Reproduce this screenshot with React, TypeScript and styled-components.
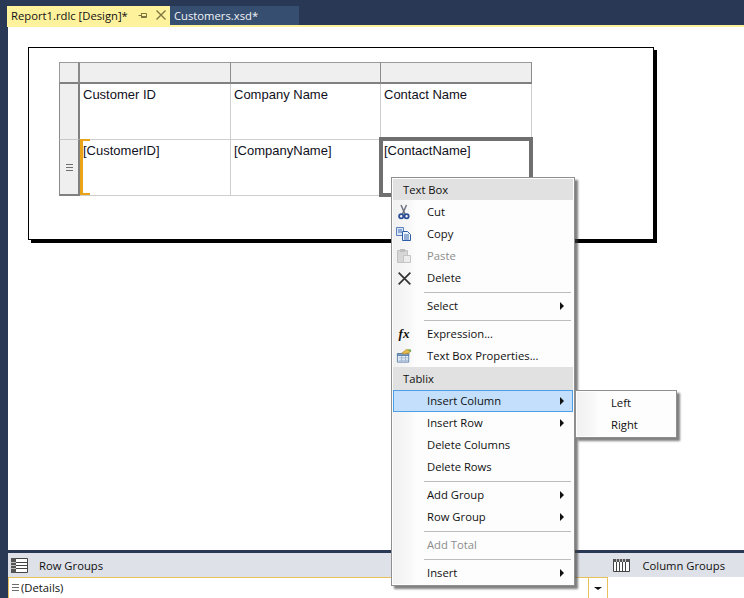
import React from "react";
import styled, { createGlobalStyle } from "styled-components";

const GlobalStyle = createGlobalStyle`
  html, body {
    margin: 0;
    padding: 0;
    background: #293955;
  }
  * {
    box-sizing: border-box;
  }
`;

const uiFont = `"Open Sans", "Noto Sans", sans-serif`;

const Page = styled.div`
  position: relative;
  width: 744px;
  height: 598px;
  overflow: hidden;
  display: flex;
  flex-direction: column;
  padding: 6px 0 0 7px;
  background: #293955;
  font-family: ${uiFont};
  font-size: 11.25px;
  color: #101010;
`;

const TabStrip = styled.div`
  display: flex;
  height: 19px;
  flex: none;
`;

const Tab = styled.div<{ $active?: boolean }>`
  display: flex;
  align-items: center;
  width: ${(p) => (p.$active ? "163px" : "129px")};
  padding: 0 0 1px 4px;
  background: ${(p) => (p.$active ? "#fff29d" : "#364e6f")};
  color: ${(p) => (p.$active ? "#111" : "#f2f4f8")};
  white-space: nowrap;
`;

const TabActions = styled.div`
  display: flex;
  align-items: center;
  gap: 9px;
  margin-left: 10px;
`;

const AccentLine = styled.div`
  height: 2px;
  flex: none;
  background: #fff29d;
`;

const Surface = styled.div`
  flex: 1;
  margin-left: 1px;
  background: #fff;
  padding: 20px 0 0 20px;
`;

const ReportBody = styled.div`
  width: 626px;
  height: 193px;
  border: 1px solid #000;
  box-shadow: 3px 3px 0 #000;
  padding: 14px 0 0 30px;
  background: #fff;
`;

const Tablix = styled.div`
  display: grid;
  grid-template-columns: 21px 151px 150px 151px;
  grid-template-rows: 22px 56px 56px;
  width: 473px;
  font-family: "Liberation Sans", Arial, sans-serif;
  font-size: 13px;
  color: #10101c;
`;

const Corner = styled.div`
  background: #efefef;
  border: 1px solid #9a9a9a;
  border-right: 2px solid #8a8a8a;
  border-bottom: 2px solid #808080;
`;

const ColumnHandle = styled.div`
  background: #efefef;
  border-top: 1px solid #9a9a9a;
  border-right: 1px solid #8c8c8c;
  border-bottom: 2px solid #808080;
`;

const RowHandle = styled.div<{ $last?: boolean }>`
  display: flex;
  align-items: center;
  justify-content: center;
  background: #efefef;
  border-left: 1px solid #8a8a8a;
  border-right: 2px solid #808080;
  border-bottom: ${(p) => (p.$last ? "2px solid #808080" : "1px solid #c8c8c8")};
`;

const Cell = styled.div<{ $selected?: boolean; $handle?: boolean }>`
  position: relative;
  padding: 3px 0 0 3px;
  background: #fff;
  border-right: 1px solid #cfcfcf;
  border-bottom: 1px solid #cfcfcf;

  ${(p) =>
    p.$selected &&
    `
    &::after {
      content: "";
      position: absolute;
      inset: -3px -2px -2px -2px;
      border: 4px solid #6f6f6f;
    }
  `}

  ${(p) =>
    p.$handle &&
    `
    &::before {
      content: "";
      position: absolute;
      left: 0;
      top: -1px;
      bottom: 0;
      width: 7px;
      border-left: 3px solid #e8a317;
      border-top: 2px solid #e8a317;
      border-bottom: 2px solid #e8a317;
      clip-path: polygon(0 0, 100% 0, 100% 2px, 3px 2px, 3px calc(100% - 2px), 100% calc(100% - 2px), 100% 100%, 0 100%);
    }
  `}
`;

const BottomPanel = styled.div`
  flex: none;
  margin-left: 1px;
  border-top: 3px solid #293955;
`;

const GroupBar = styled.div`
  display: flex;
  align-items: center;
  height: 24px;
  padding-left: 3px;
  background: #dee1e8;
`;

const GroupLabel = styled.span`
  margin-left: 11px;
`;

const ColumnGroups = styled.div`
  display: flex;
  align-items: center;
  margin-left: auto;
  padding-right: 19px;

  ${GroupLabel} {
    margin-left: 12px;
  }
`;

const GroupRows = styled.div`
  display: flex;
  height: 21px;
  background: #fff;
`;

const DetailsRow = styled.div`
  display: flex;
  align-items: center;
  gap: 2px;
  width: 580px;
  padding: 0 0 1px 3px;
  border-top: 1px solid #e8c05c;
  border-left: 1px solid #e8c05c;
`;

const DropButton = styled.div`
  display: flex;
  align-items: center;
  justify-content: center;
  width: 20px;
  border-top: 1px solid #e8c05c;
  border-left: 1px solid #e8c05c;
  border-right: 1px solid #e8c05c;

  &::after {
    content: "";
    border-top: 3px solid #111;
    border-left: 4px solid transparent;
    border-right: 4px solid transparent;
  }
`;

const Menu = styled.div<{ $sub?: boolean }>`
  position: absolute;
  left: ${(p) => (p.$sub ? "575px" : "391px")};
  top: ${(p) => (p.$sub ? "390px" : "177px")};
  width: ${(p) => (p.$sub ? "102px" : "184px")};
  padding: 1px;
  background: #fdfdfd;
  border: 1px solid #8f8f8f;
  box-shadow: 3px 3px 2px rgba(60, 60, 60, 0.65);
`;

const MenuInner = styled.div<{ $gutter: number }>`
  background: linear-gradient(
    to right,
    #f1f1f1 0,
    #f8f8f8 ${(p) => p.$gutter - 6}px,
    #fdfdfd ${(p) => p.$gutter}px
  );
`;

const MenuHeader = styled.div<{ $height: number; $gap?: number }>`
  display: flex;
  align-items: center;
  height: ${(p) => p.$height}px;
  margin-bottom: ${(p) => p.$gap ?? 0}px;
  padding: 0 0 1px 10px;
  background: #e1e1e1;
`;

const MenuItem = styled.div<{ $hot?: boolean; $disabled?: boolean }>`
  position: relative;
  display: flex;
  align-items: center;
  height: 22px;
  padding: 0 0 1px 34px;
  color: ${(p) => (p.$disabled ? "#8d8d8d" : "inherit")};
  background: ${(p) => (p.$hot ? "#c3dffb" : "transparent")};
  box-shadow: ${(p) => (p.$hot ? "inset 0 0 0 1px #4e9fe6" : "none")};
`;

const MenuIcon = styled.span`
  position: absolute;
  left: 3px;
  top: 3px;
  width: 16px;
  height: 16px;
  display: flex;
  align-items: center;
  justify-content: center;
`;

const FxGlyph = styled.span`
  font-family: "Liberation Serif", serif;
  font-style: italic;
  font-weight: bold;
  font-size: 13px;
  line-height: 16px;
  color: #111;
`;

const SubArrow = styled.span`
  position: absolute;
  right: 9px;
  top: 7px;
  border-left: 4px solid #111;
  border-top: 4px solid transparent;
  border-bottom: 4px solid transparent;
`;

const Separator = styled.div`
  height: 6px;
  margin-left: 31px;
  margin-right: 2px;
  display: flex;
  align-items: center;

  &::after {
    content: "";
    flex: 1;
    height: 1px;
    background: #bdbdbd;
  }
`;

const HamburgerIcon = () => (
  <svg width="7" height="7" viewBox="0 0 7 7">
    <path d="M0 .5h7M0 3.5h7M0 6.5h7" stroke="#6e6e6e" strokeWidth="1" />
  </svg>
);

const PinIcon = () => (
  <svg width="9" height="9" viewBox="0 0 9 9">
    <path d="M.5 4.5H3M3.5 2v5M3.5 2.5H8.5V6.5H3.5M3.5 5.5H8.5" stroke="#7d7540" fill="none" />
  </svg>
);

const CloseIcon = ({ color = "#7d7540", size = 10, width = 1.4 }: { color?: string; size?: number; width?: number }) => (
  <svg width={size} height={size} viewBox="0 0 10 10">
    <path d="M.5.5l9 9M9.5.5l-9 9" stroke={color} strokeWidth={width} fill="none" />
  </svg>
);

const ScissorsIcon = () => (
  <svg width="16" height="16" viewBox="0 0 16 16">
    <path d="M5 1l4 9M10.5 1L6.5 10" stroke="#6d7480" strokeWidth="1.5" fill="none" />
    <circle cx="5.2" cy="12.2" r="2.1" fill="none" stroke="#2c4f95" strokeWidth="1.8" />
    <circle cx="10.6" cy="12.2" r="2.1" fill="none" stroke="#2c4f95" strokeWidth="1.8" />
  </svg>
);

const CopyIcon = () => (
  <svg width="16" height="16" viewBox="0 0 16 16">
    <path d="M.5 1.5h7v8h-7z" fill="#dbe6f6" stroke="#5b80bd" />
    <path d="M6.5 5.5h5l3 3v6h-8z" fill="#eef4fc" stroke="#2f5ea8" />
    <path d="M2 4h4M2 6h4M8 9h5M8 11h5M8 13h5" stroke="#3e6bb2" />
  </svg>
);

const PasteIcon = () => (
  <svg width="16" height="16" viewBox="0 0 16 16">
    <path d="M1.5 2.5h10v12h-10z" fill="#d6d6d6" stroke="#c2c2c2" />
    <path d="M4 1h5v3H4z" fill="#bdbdbd" />
    <path d="M7.5 7.5h7v7h-7z" fill="#ececec" stroke="#c4c4c4" />
  </svg>
);

const PropertiesIcon = () => (
  <svg width="17" height="16" viewBox="0 0 17 16">
    <path d="M1.5 5.5h12v9h-12z" fill="#eef3fa" stroke="#5c7fa8" />
    <path d="M1.5 5.5h12v2h-12z" fill="#7fa3cc" stroke="#5c7fa8" />
    <path d="M3 10h10M3 12.5h10M6 8v6M10 8v6" stroke="#9db4cf" />
    <path d="M6 5l5-4 4 1-1 3-5 1z" fill="#e6b84a" stroke="#a88428" strokeWidth=".6" />
    <path d="M12 1h4v3z" fill="#6ea84a" />
  </svg>
);

const RowGroupIcon = () => (
  <svg width="17" height="15" viewBox="0 0 17 15">
    <path d="M.5.5h16v14H.5z" fill="#fff" stroke="#444" />
    <path d="M0 0h5v15H0z" fill="#555" />
    <path d="M0 4.5h17M0 7.5h17M0 10.5h17" stroke="#444" />
    <path d="M0 4.5h5M0 7.5h5M0 10.5h5" stroke="#bbb" />
  </svg>
);

const ColumnGroupIcon = () => (
  <svg width="17" height="15" viewBox="0 0 17 15">
    <path d="M.5 1.5h16v12H.5z" fill="#fff" stroke="#444" />
    <path d="M0 1h17v3H0z" fill="#555" />
    <path d="M3.5 1v13M6.5 1v13M9.5 1v13M12.5 1v13" stroke="#444" />
    <path d="M3.5 1v3M6.5 1v3M9.5 1v3M12.5 1v3" stroke="#bbb" />
  </svg>
);

export default function App() {
  return (
    <>
      <GlobalStyle />
      <Page>
        <TabStrip>
          <Tab $active>
            Report1.rdlc [Design]*
            <TabActions>
              <PinIcon />
              <CloseIcon />
            </TabActions>
          </Tab>
          <Tab>Customers.xsd*</Tab>
        </TabStrip>
        <AccentLine />

        <Surface>
          <ReportBody>
            <Tablix>
              <Corner />
              <ColumnHandle />
              <ColumnHandle />
              <ColumnHandle />

              <RowHandle />
              <Cell>Customer ID</Cell>
              <Cell>Company Name</Cell>
              <Cell>Contact Name</Cell>

              <RowHandle $last>
                <HamburgerIcon />
              </RowHandle>
              <Cell $handle>[CustomerID]</Cell>
              <Cell>[CompanyName]</Cell>
              <Cell $selected>[ContactName]</Cell>
            </Tablix>
          </ReportBody>
        </Surface>

        <BottomPanel>
          <GroupBar>
            <RowGroupIcon />
            <GroupLabel>Row Groups</GroupLabel>
            <ColumnGroups>
              <ColumnGroupIcon />
              <GroupLabel>Column Groups</GroupLabel>
            </ColumnGroups>
          </GroupBar>
          <GroupRows>
            <DetailsRow>
              <HamburgerIcon />
              (Details)
            </DetailsRow>
            <DropButton />
          </GroupRows>
        </BottomPanel>

        <Menu>
          <MenuInner $gutter={23}>
            <MenuHeader $height={21} $gap={1}>Text Box</MenuHeader>
            <MenuItem>
              <MenuIcon><ScissorsIcon /></MenuIcon>
              Cut
            </MenuItem>
            <MenuItem>
              <MenuIcon><CopyIcon /></MenuIcon>
              Copy
            </MenuItem>
            <MenuItem $disabled>
              <MenuIcon><PasteIcon /></MenuIcon>
              Paste
            </MenuItem>
            <MenuItem>
              <MenuIcon><CloseIcon color="#333" size={13} width={1.3} /></MenuIcon>
              Delete
            </MenuItem>
            <Separator />
            <MenuItem>
              Select
              <SubArrow />
            </MenuItem>
            <Separator />
            <MenuItem>
              <MenuIcon><FxGlyph>fx</FxGlyph></MenuIcon>
              Expression...
            </MenuItem>
            <MenuItem>
              <MenuIcon><PropertiesIcon /></MenuIcon>
              Text Box Properties...
            </MenuItem>
            <MenuHeader $height={23}>Tablix</MenuHeader>
            <MenuItem $hot>
              Insert Column
              <SubArrow />
            </MenuItem>
            <MenuItem>
              Insert Row
              <SubArrow />
            </MenuItem>
            <MenuItem>Delete Columns</MenuItem>
            <MenuItem>Delete Rows</MenuItem>
            <Separator />
            <MenuItem>
              Add Group
              <SubArrow />
            </MenuItem>
            <MenuItem>
              Row Group
              <SubArrow />
            </MenuItem>
            <Separator />
            <MenuItem $disabled>Add Total</MenuItem>
            <Separator />
            <MenuItem>
              Insert
              <SubArrow />
            </MenuItem>
          </MenuInner>
        </Menu>

        <Menu $sub>
          <MenuInner $gutter={22}>
            <MenuItem>Left</MenuItem>
            <MenuItem>Right</MenuItem>
          </MenuInner>
        </Menu>
      </Page>
    </>
  );
}
